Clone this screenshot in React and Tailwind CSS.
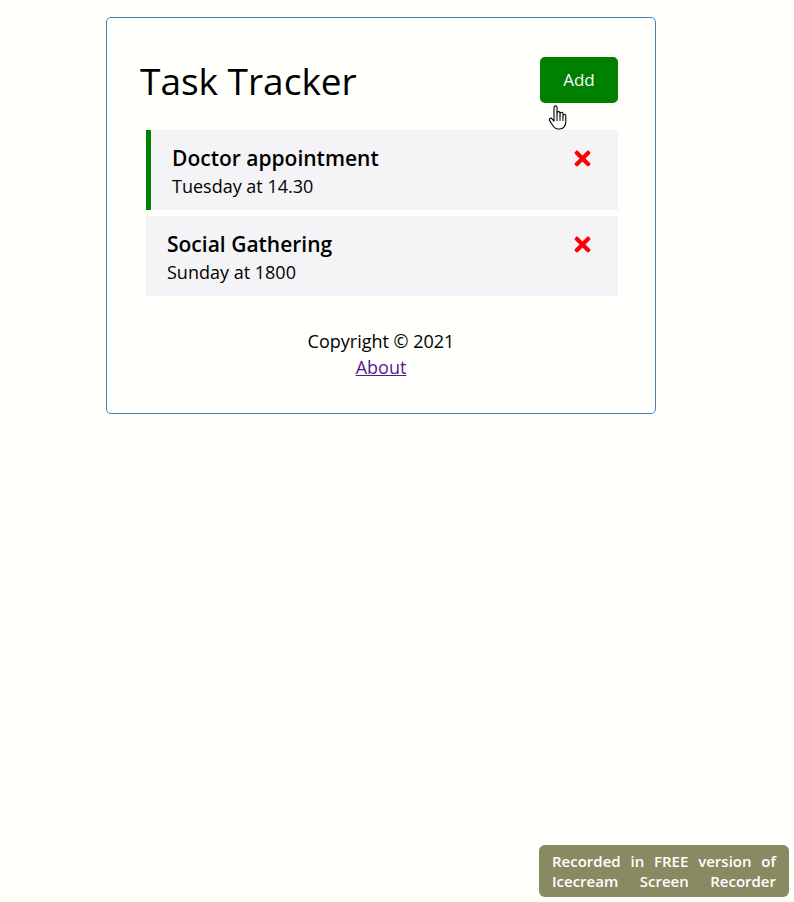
import { FaTimes } from 'react-icons/fa';

/* tasks shown in the tracker */
const tasks = [
  { id: 1, text: 'Doctor appointment', day: 'Tuesday at 14.30', reminder: true },
  { id: 2, text: 'Social Gathering', day: 'Sunday at 1800', reminder: false },
];

function Task({ task }) {
  return (
    <div
      className={`h-[80px] bg-[#f4f4f6] pt-[14px] pr-[24px] ${
        task.reminder ? 'border-l-[5px] border-[#008000] pl-[21px]' : 'pl-[21px]'
      }`}
    >
      <div className="flex items-center justify-between">
        <h3 className="text-[21px] font-semibold leading-[28px] text-black">{task.text}</h3>
        <FaTimes size={23} className="text-[#ff0000]" />
      </div>
      <p className="text-[18px] leading-[28px] text-black">{task.day}</p>
    </div>
  );
}

function HandCursor() {
  return (
    <svg width="20" height="26" viewBox="0 0 20 26" className="absolute left-[548px] top-[105px]">
      <path
        d="M6 2.5c0-1 .7-1.6 1.5-1.6S9 1.5 9 2.5V11l.2-3c0-.9.7-1.4 1.4-1.4s1.4.5 1.4 1.4V11l.2-2.3c0-.9.7-1.4 1.4-1.4s1.4.5 1.4 1.4V12l.2-1.5c0-.9.6-1.3 1.3-1.3s1.3.4 1.3 1.3v6.5c0 3.5-2.3 7-6.2 7H10c-2.3 0-3.4-1.1-4.6-2.8L1.6 15.6c-.6-.9-.3-1.8.4-2.2.7-.4 1.5-.2 2 .5L6 16.2z"
        fill="#fff"
        stroke="#000"
        strokeWidth="1.1"
        strokeLinejoin="round"
      />
      <path d="M9 11v5M12 11v5M15 12v4" stroke="#000" strokeWidth="1" />
    </svg>
  );
}

export default function App() {
  return (
    <div className="relative h-[902px] w-full bg-[#fffffb] pt-[17px] font-['Open_Sans',sans-serif] text-black">
      <div className="ml-[106px] h-[397px] w-[550px] rounded-[5px] border border-[#4682b4] px-[30px] pt-[30px]">
        {/* header */}
        <header className="mb-[18px] flex h-[64px] items-center justify-between">
          <h1 className="ml-[3px] text-[37px] font-medium leading-none">Task Tracker</h1>
          <button className="mr-[7px] h-[46px] w-[78px] rounded-[5px] bg-[#008000] text-[17px] text-white">
            Add
          </button>
        </header>

        {/* task list */}
        <div className="ml-[9px] mr-[7px] flex flex-col gap-[6px]">
          {tasks.map((t) => (
            <Task key={t.id} task={t} />
          ))}
        </div>

        {/* footer */}
        <footer className="mt-[32px] text-center text-[18px] leading-[26px]">
          <p>Copyright © 2021</p>
          <a href="#" className="text-[#551a8b] underline">
            About
          </a>
        </footer>
      </div>

      <HandCursor />

      {/* recorder watermark */}
      <div className="absolute bottom-[5px] right-[5px] flex h-[52px] w-[250px] flex-col justify-center rounded-[6px] bg-[#8a8a62] px-[13px] text-[15px] font-semibold leading-[20px] text-white">
        <div className="flex justify-between">
          <span>Recorded</span>
          <span>in</span>
          <span>FREE</span>
          <span>version</span>
          <span>of</span>
        </div>
        <div className="flex justify-between">
          <span>Icecream</span>
          <span>Screen</span>
          <span>Recorder</span>
        </div>
      </div>
    </div>
  );
}
